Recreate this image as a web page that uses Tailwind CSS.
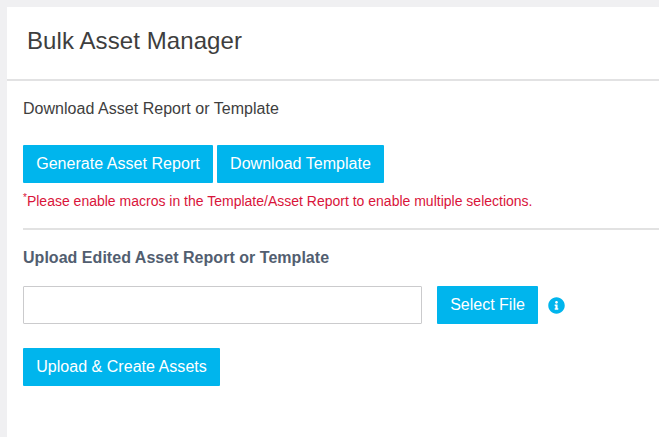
<!DOCTYPE html>
<html lang="en">
<head>
  <meta charset="UTF-8" />
  <meta name="viewport" content="width=device-width, initial-scale=1.0"/>
  <title>Bulk Asset Manager</title>
  <script src="https://cdn.jsdelivr.net/npm/@tailwindcss/browser@4"></script>
</head>

<body class="bg-[#f0f0f2] h-screen overflow-hidden pl-[7px] pt-[7px] font-['Liberation_Sans',Arial,sans-serif] text-base text-[#3e3e3e]">

  <main class="bg-white h-full">
    <header class="h-[74px] pl-5 pt-[18px] border-b-2 border-[#e2e2e3]">
      <h1 class="text-2xl leading-8 tracking-[0.09px]">Bulk Asset Manager</h1>
    </header>

    <section class="pl-4 pt-4">
      <p class="leading-6 tracking-[0.03px]">Download Asset Report or Template</p>

      <div class="flex gap-1 mt-6">
        <button type="button" class="w-[190px] h-[38px] pb-px bg-[#00b5ed] text-white tracking-[0.04px] rounded-[1px] whitespace-nowrap">Generate Asset Report</button>
        <button type="button" class="w-[167px] h-[38px] pb-px bg-[#00b5ed] text-white tracking-[0.04px] rounded-[1px] whitespace-nowrap">Download Template</button>
      </div>

      <p class="mt-2 h-5 text-sm leading-5 text-[#d9143a] whitespace-nowrap"><sup class="text-[10px]">*</sup>Please enable macros in the Template/Asset Report to enable multiple selections.</p>

      <hr class="mt-[17px] border-t-2 border-[#e2e2e2]">

      <h2 class="mt-4 font-bold leading-6 tracking-[0.03px] text-[#525e70]">Upload Edited Asset Report or Template</h2>

      <form>
        <div class="flex items-center mt-4">
          <input type="text" aria-label="Selected file" class="w-[399px] h-[38px] px-3 border border-[#cbcbcd] rounded-[1px]">
          <button type="button" class="ml-[15px] w-[101px] h-[38px] pb-px bg-[#00b5ed] text-white rounded-[1px]">Select File</button>
          <svg class="ml-2.5 w-[17px] h-[17px] fill-[#00b5ed]" viewBox="0 0 512 512">
            <path d="M256 8C119 8 8 119 8 256s111 248 248 248 248-111 248-248S393 8 256 8zm0 110c23.200 0 42 18.800 42 42s-18.800 42-42 42-42-18.800-42-42 18.800-42 42-42zm56 254c0 6.600-5.400 12-12 12h-88c-6.600 0-12-5.400-12-12v-24c0-6.600 5.400-12 12-12h12v-64h-12c-6.600 0-12-5.400-12-12v-24c0-6.600 5.400-12 12-12h64c6.600 0 12 5.400 12 12v100h12c6.600 0 12 5.400 12 12v24z"/>
          </svg>
        </div>

        <button type="button" class="block mt-6 w-[197px] h-[38px] pb-px bg-[#00b5ed] text-white tracking-[0.04px] rounded-[1px] whitespace-nowrap">Upload &amp; Create Assets</button>
      </form>
    </section>
  </main>

</body>
</html>
